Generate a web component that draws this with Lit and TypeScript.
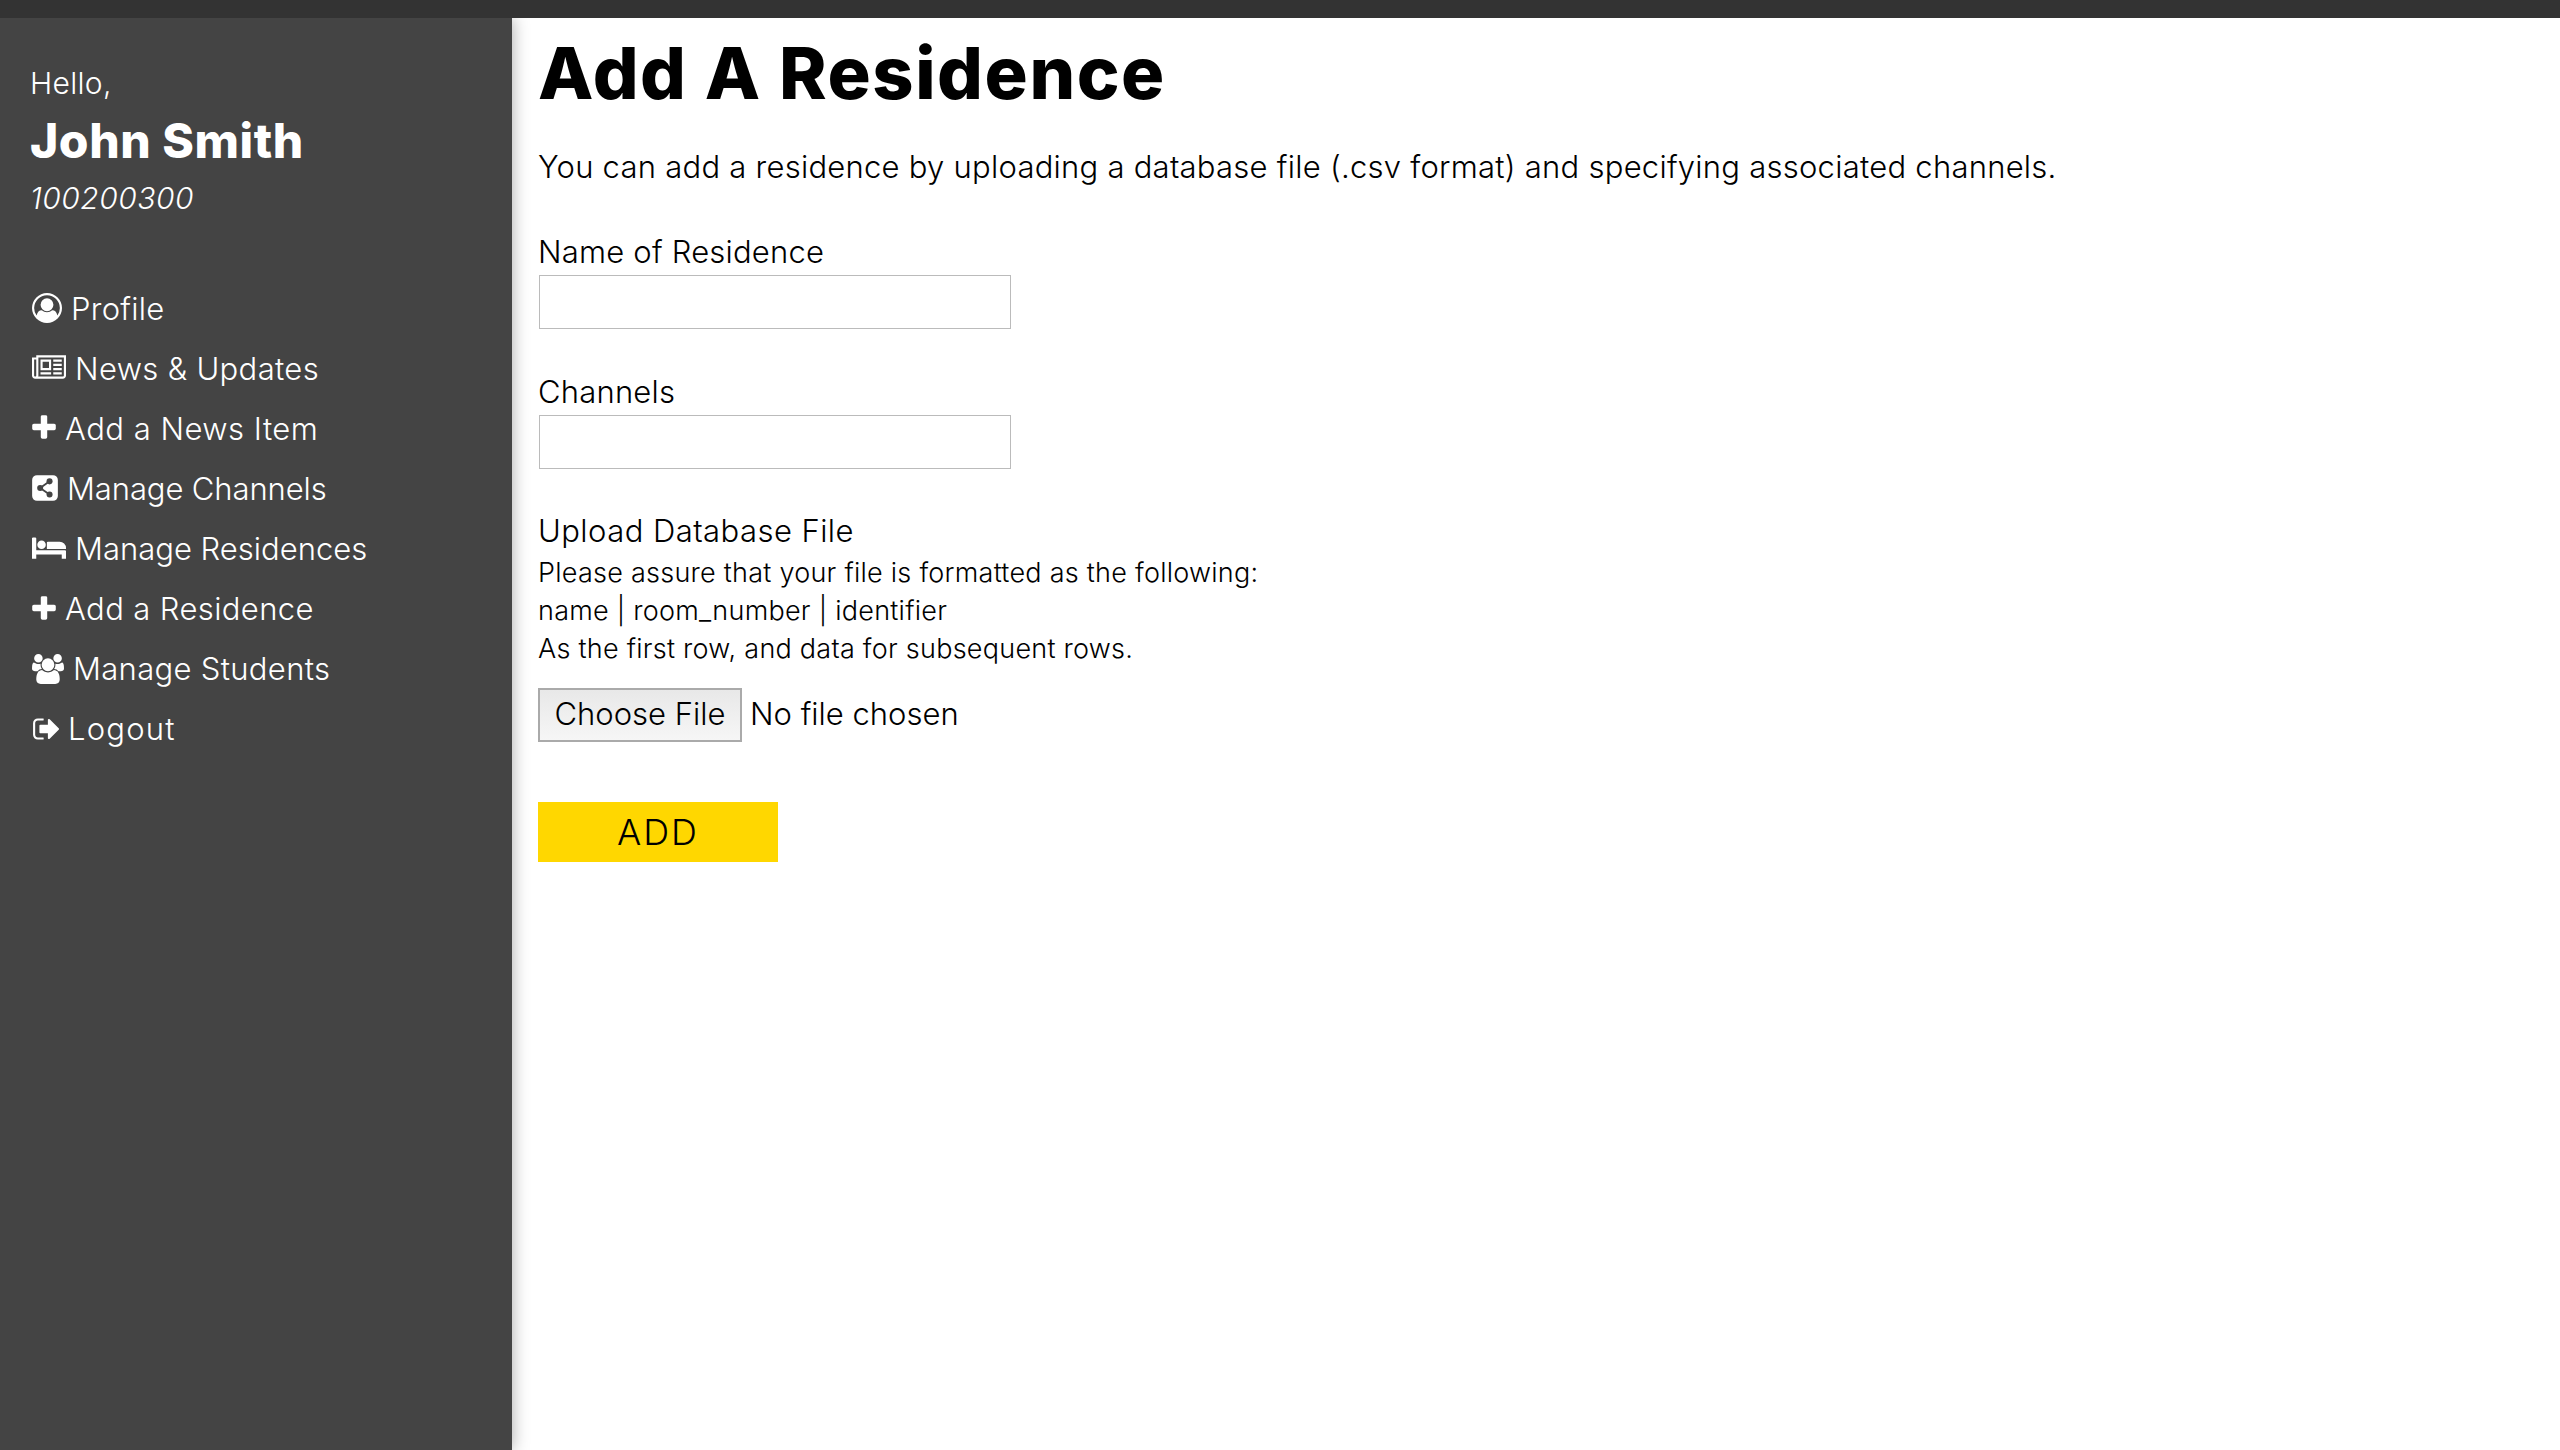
import { LitElement, html, css, svg } from "lit";
import { customElement } from "lit/decorators.js";
import { styleMap } from "lit/directives/style-map.js";

const icons = {
  user: svg`<svg class="ic" width="30" height="30" viewBox="0 0 1792 1792"><path fill="currentColor" d="M896 0q182 0 348 71t286 191 191 286 71 348q0 181-70.5 347t-190.5 286-286 191.5-349 71.5-349-71-285.5-191.5-190.5-286-71-347.5 71-348 191-286 286-191 348-71zm619 1351q149-205 149-455 0-156-61-298t-164-245-245-164-298-61-298 61-245 164-164 245-61 298q0 250 149 455 66-327 306-327 131 128 313 128t313-128q240 0 306 327zm-235-647q0-159-112.5-271.5t-271.5-112.5-271.5 112.5-112.5 271.5 112.5 271.5 271.5 112.5 271.5-112.5 112.5-271.5z"/></svg>`,
  news: svg`<svg class="ic" width="34" height="30" viewBox="0 0 2048 1792"><path fill="currentColor" d="M1024 512h-384v384h384v-384zm128 640v128h-640v-128h640zm0-768v640h-640v-640h640zm640 768v128h-512v-128h512zm0-256v128h-512v-128h512zm0-256v128h-512v-128h512zm0-256v128h-512v-128h512zm-1536 960v-960h-128v960q0 26 19 45t45 19 45-19 19-45zm1664 0v-1088h-1536v1088q0 33-11 64h1483q26 0 45-19t19-45zm128-1216v1216q0 80-56 136t-136 56h-1664q-80 0-136-56t-56-136v-1088h256v-128h1792z"/></svg>`,
  plus: svg`<svg class="ic" width="24" height="30" viewBox="0 0 1408 1792"><path fill="currentColor" transform="translate(-192 0)" d="M1600 736v192q0 40-28 68t-68 28h-416v416q0 40-28 68t-68 28h-192q-40 0-68-28t-28-68v-416h-416q-40 0-68-28t-28-68v-192q0-40 28-68t68-28h416v-416q0-40 28-68t68-28h192q40 0 68 28t28 68v416h416q40 0 68 28t28 68z"/></svg>`,
  share: svg`<svg class="ic" width="26" height="30" viewBox="0 0 1536 1792"><path fill="currentColor" d="M288 128h960q119 0 203.5 84.5t84.5 203.5v960q0 119-84.5 203.5t-203.5 84.5h-960q-119 0-203.5-84.5t-84.5-203.5v-960q0-119 84.5-203.5t203.5-84.5z"/><circle cx="1040" cy="500" r="180" fill="#444"/><circle cx="1040" cy="1290" r="180" fill="#444"/><circle cx="480" cy="896" r="180" fill="#444"/><path d="M1040 500L480 896L1040 1290" fill="none" stroke="#444" stroke-width="110"/></svg>`,
  bed: svg`<svg class="ic" width="34" height="30" viewBox="0 0 2048 1792"><path fill="currentColor" d="M256 1024h1728q26 0 45 19t19 45v448h-256v-256h-1536v256h-256v-1216q0-26 19-45t45-19h128q26 0 45 19t19 45v704zm576-320q0-106-75-181t-181-75-181 75-75 181 75 181 181 75 181-75 75-181zm1216 256v-64q0-159-112.5-271.5t-271.5-112.5h-704q-26 0-45 19t-19 45v384h1152z"/></svg>`,
  users: svg`<svg class="ic" width="32" height="30" viewBox="0 0 1920 1792"><path fill="currentColor" d="M593 896q-162 5-265 128h-134q-82 0-138-40.5t-56-118.5q0-353 124-353 6 0 43.5 21t97.5 42.5 119 21.5q67 0 133-23-5 37-5 66 0 139 81 256zm1071 637q0 120-73 189.5t-194 69.5h-874q-121 0-194-69.5t-73-189.5q0-53 3.5-103.5t14-109 26.5-108.5 43-97.5 62-81 85.5-53.5 111.5-20q10 0 43 21.5t73 48 107 48 135 21.5 135-21.5 107-48 73-48 43-21.5q61 0 111.5 20t85.5 53.5 62 81 43 97.5 26.5 108.5 14 109 3.5 103.5zm-1024-1277q0 106-75 181t-181 75-181-75-75-181 75-181 181-75 181 75 75 181zm704 384q0 159-112.5 271.5t-271.5 112.5-271.5-112.5-112.5-271.5 112.5-271.5 271.5-112.5 271.5 112.5 112.5 271.5zm576 225q0 78-56 118.5t-138 40.5h-134q-103-123-265-128 81-117 81-256 0-29-5-66 66 23 133 23 59 0 119-21.5t97.5-42.5 43.5-21q124 0 124 353zm-128-609q0 106-75 181t-181 75-181-75-75-181 75-181 181-75 181 75 75 181z"/></svg>`,
  out: svg`<svg class="ic" width="27" height="30" viewBox="0 0 1632 1792"><path fill="currentColor" d="M704 1440q0 4 1 20t.5 26.5-3 23.5-10 19.5-20.5 6.5h-320q-119 0-203.5-84.5t-84.5-203.5v-704q0-119 84.5-203.5t203.5-84.5h320q13 0 22.5 9.5t9.5 22.5q0 4 1 20t.5 26.5-3 23.5-10 19.5-20.5 6.5h-320q-66 0-113 47t-47 113v704q0 66 47 113t113 47h312l11.5 1 11.5 3 8 5.5 7 9 2 13.5zm928-544q0 26-19 45l-544 544q-19 19-45 19t-45-19-19-45v-288h-448q-26 0-45-19t-19-45v-384q0-26 19-45t45-19h448v-288q0-26 19-45t45-19 45 19l544 544q19 19 19 45z"/></svg>`,
};

const nav: [keyof typeof icons, string, number][] = [
  ["user", "Profile", 0.28],
  ["news", "News & Updates", 0.35],
  ["plus", "Add a News Item", 0.48],
  ["share", "Manage Channels", -0.1],
  ["bed", "Manage Residences", 0],
  ["plus", "Add a Residence", 0.38],
  ["users", "Manage Students", 0.32],
  ["out", "Logout", 1.2],
];

@customElement("app-root")
export class AppRoot extends LitElement {
  static styles = css`
    :host {
      display: flex;
      flex-direction: column;
      height: 1450px;
      font-family: "Inter", "Liberation Sans", sans-serif;
      font-weight: 300;
      color: #000;
      background: #fff;
      overflow: hidden;
    }
    .top { height: 18px; background: #333; flex: none; position: relative; z-index: 1; }
    .body { flex: 1; display: flex; min-height: 0; }
    .side {
      width: 512px;
      flex: none;
      background: #444;
      color: #fff;
      padding: 42px 0 0 30px;
      box-sizing: border-box;
      box-shadow: 0 0 16px rgba(0,0,0,.35);
      position: relative;
    }
    .hello { font-size: 30px; line-height: 46px; letter-spacing: 0.3px; }
    .name { font-size: 48px; font-weight: 800; line-height: 64px; margin-top: 3px; letter-spacing: 0.55px; }
    .id { font-size: 30px; font-style: italic; line-height: 44px; margin-top: 3px; margin-bottom: -1px; letter-spacing: 0.5px; }
    nav { margin: 59px 0 0 2px; display: flex; flex-direction: column; }
    .item { display: flex; align-items: center; height: 60.1px; font-size: 31px; gap: 9px; white-space: nowrap; }
    .ic { flex: none; display: block; }
    main { flex: 1; padding: 10px 0 0 26px; min-width: 0; }
    h1 { margin: 0; font-size: 72px; font-weight: 800; line-height: 90px; letter-spacing: 1.55px; }
    .lead { margin: 27px 0 0; font-size: 31px; line-height: 44px; white-space: nowrap; letter-spacing: 0.25px; }
    label { display: block; font-size: 31px; line-height: 47px; padding-top: 3px; letter-spacing: 0.2px; }
    .f1 { margin-top: 36px; }
    .f2 { margin-top: 36px; }
    .f3 { margin-top: 42px; line-height: 40px; padding-top: 0; letter-spacing: 0.45px; }
    input.txt { display: block; box-sizing: border-box; width: 472px; height: 54px; margin: 0 0 0 1px; border: 1px solid #bbb; background: #fff; padding: 0; outline: none; border-radius: 0; }
    .hint { font-size: 27px; line-height: 38px; margin-top: 2.7px; white-space: nowrap; letter-spacing: 0.25px; }
    input.file { display: block; margin: 20.4px 0 0; font: inherit; font-size: 31px; height: 54px; width: 500px; color: #000; }
    input.file::file-selector-button {
      font: inherit;
      font-size: 31px;
      height: 54px;
      width: 204px;
      margin: 0 8px 0 0;
      padding: 0 0 4px;
      border: 2px solid #aaa;
      border-radius: 0;
      background: linear-gradient(#e8e8e8, #f6f6f6);
      color: #000;
    }
    .add { display: block; margin-top: 60px; width: 240px; height: 60px; border: 0; background: #ffd700; font: inherit; font-size: 36px; letter-spacing: 2px; color: #000; padding: 0; }
  `;

  render() {
    return html`
      <div class="top"></div>
      <div class="body">
        <aside class="side">
          <div class="hello">Hello,</div>
          <div class="name">John Smith</div>
          <div class="id">100200300</div>
          <nav>${nav.map(([i, t, ls]) => html`<div class="item">${icons[i]}<span style=${styleMap({ letterSpacing: `${ls}px` })}>${t}</span></div>`)}</nav>
        </aside>
        <main>
          <h1>Add A Residence</h1>
          <p class="lead">You can add a residence by uploading a database file (.csv format) and specifying associated channels.</p>
          <label class="f1">Name of Residence</label>
          <input class="txt" type="text" />
          <label class="f2">Channels</label>
          <input class="txt" type="text" />
          <label class="f3">Upload Database File</label>
          <div class="hint">Please assure that your file is formatted as the following:<br />name | room_number | identifier<br />As the first row, and data for subsequent rows.</div>
          <input class="file" type="file" />
          <button class="add">ADD</button>
        </main>
      </div>
    `;
  }
}
